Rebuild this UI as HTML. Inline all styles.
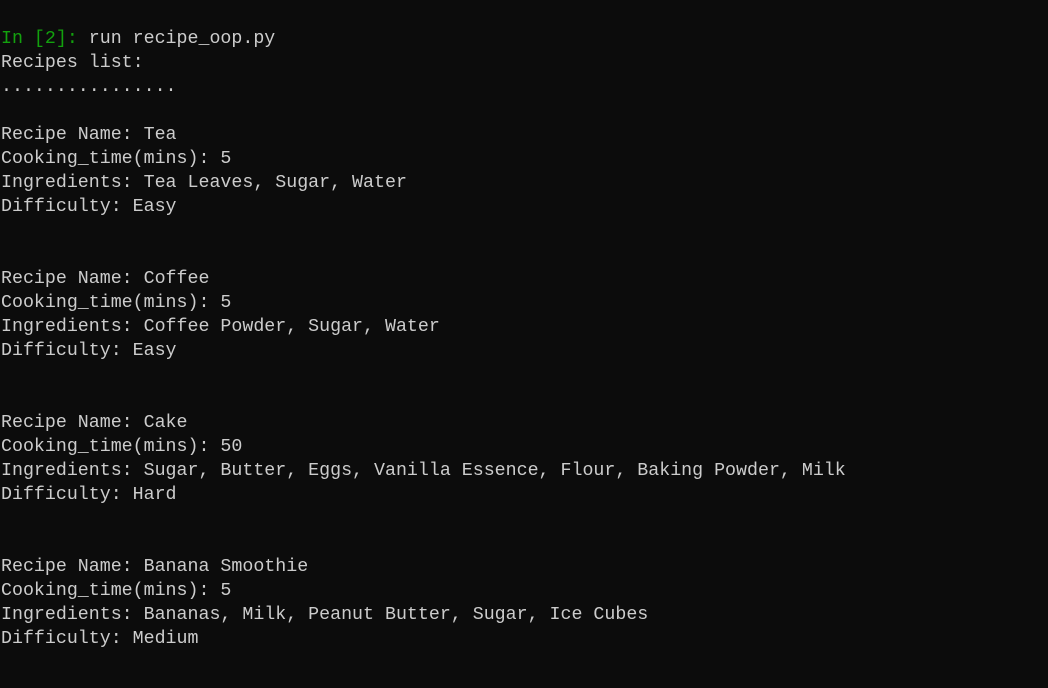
<!DOCTYPE html>
<html><head><style>
html,body{margin:0;padding:0;background:#0c0c0c;width:1048px;height:688px;overflow:hidden}
pre{margin:0;padding:27px 0 0 1px;font-family:"Liberation Mono",monospace;font-size:18.3px;line-height:24px;color:#cccccc;white-space:pre}
.g{color:#13a10e}
</style></head><body><pre><span class="g">In [2]:</span> run recipe_oop.py
Recipes list:
................

Recipe Name: Tea
Cooking_time(mins): 5
Ingredients: Tea Leaves, Sugar, Water
Difficulty: Easy


Recipe Name: Coffee
Cooking_time(mins): 5
Ingredients: Coffee Powder, Sugar, Water
Difficulty: Easy


Recipe Name: Cake
Cooking_time(mins): 50
Ingredients: Sugar, Butter, Eggs, Vanilla Essence, Flour, Baking Powder, Milk
Difficulty: Hard


Recipe Name: Banana Smoothie
Cooking_time(mins): 5
Ingredients: Bananas, Milk, Peanut Butter, Sugar, Ice Cubes
Difficulty: Medium
</pre></body></html>
